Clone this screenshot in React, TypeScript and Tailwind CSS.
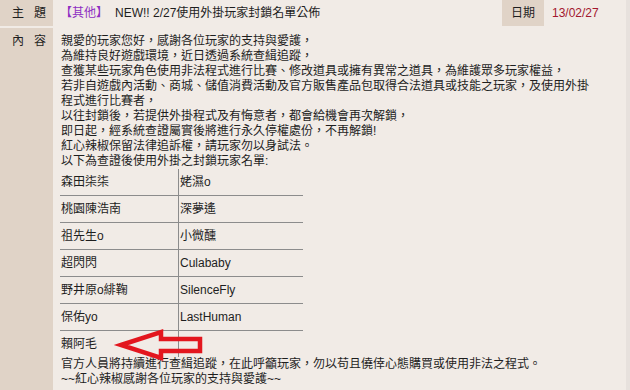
import React from "react";

const lines = [
  "親愛的玩家您好，感謝各位玩家的支持與愛護，",
  "為維持良好遊戲環境，近日透過系統查緝追蹤，",
  "查獲某些玩家角色使用非法程式進行比賽、修改道具或擁有異常之道具，為維護眾多玩家權益，",
  "若非自遊戲內活動、商城、儲值消費活動及官方販售產品包取得合法道具或技能之玩家，及使用外掛",
  "程式進行比賽者，",
  "以往封鎖後，若提供外掛程式及有悔意者，都會給機會再次解鎖，",
  "即日起，經系統查證屬實後將進行永久停權處份，不再解鎖!",
  "紅心辣椒保留法律追訴權，請玩家勿以身試法。",
  "以下為查證後使用外掛之封鎖玩家名單:",
];

const rows: [string, string][] = [
  ["森田柒柒", "姥濕o"],
  ["桃園陳浩南", "深夢遙"],
  ["祖先生o", "小微醺"],
  ["超閃閃", "Culababy"],
  ["野井原o緋鞠", "SilenceFly"],
  ["保佑yo", "LastHuman"],
  ["賴阿毛", ""],
];

export default function App() {
  return (
    <div className="w-[630px] h-[390px] overflow-hidden bg-[#f1ebe6] flex text-[12px] leading-[15px] text-[#1e1e1e] font-['Liberation_Sans','Noto_Sans_CJK_TC',sans-serif] relative">
      <div className="flex-1 flex flex-col">
        <div className="flex h-[26px]">
          <div className="w-[53px] bg-[#e0d3c7] flex items-center pl-[12px] gap-[10px]">
            <span>主</span>
            <span>題</span>
          </div>
          <div className="flex-1 flex items-center pl-[7px] whitespace-nowrap">
            <span className="text-[#8e2fc2]">【其他】</span>
            <span className="ml-[7px]">NEW!! 2/27使用外掛玩家封鎖名單公佈</span>
          </div>
          <div className="w-[42px] bg-[#e0d3c7] flex items-center justify-center">日期</div>
          <div className="w-[82px] flex items-center pl-[8px] text-[#a3172e]">13/02/27</div>
        </div>
        <div className="h-[2px]" />
        <div className="flex flex-1">
          <div className="w-[53px] bg-[#e0d3c7] pt-[6px]">
            <div className="flex pl-[12px] gap-[10px]">
              <span>內</span>
              <span>容</span>
            </div>
          </div>
          <div className="flex-1 pl-[8px] pt-[6px] whitespace-nowrap">
            {lines.map((l, i) => (
              <div key={i}>{l}</div>
            ))}
            <div className="flex flex-col w-[243px] -ml-px">
              {rows.map(([a, b], i) => (
                <React.Fragment key={i}>
                  <div className="flex h-[26px]">
                    <div className="w-[118px] pl-px flex items-center">{a}</div>
                    <div className="w-px bg-[#8c8c8c]" />
                    <div className="flex-1 pl-px flex items-center">{b}</div>
                  </div>
                  {i < rows.length - 1 && <div className="h-px bg-[#8c8c8c]" />}
                </React.Fragment>
              ))}
            </div>
            <div>官方人員將持續進行查緝追蹤，在此呼籲玩家，勿以苟且僥倖心態購買或使用非法之程式。</div>
            <div>~~紅心辣椒感謝各位玩家的支持與愛護~~</div>
          </div>
        </div>
      </div>
      <div className="w-[4px] bg-[#e7e1dd]" />
      <svg
        className="absolute left-[110px] top-[325px]"
        width="100"
        height="40"
        viewBox="0 0 100 40"
      >
        <polygon
          points="11,20 51,7 51,14 90,14 90,26 51,26 51,33"
          fill="none"
          stroke="#e3161e"
          strokeWidth="4.5"
          strokeLinejoin="miter"
        />
      </svg>
    </div>
  );
}
